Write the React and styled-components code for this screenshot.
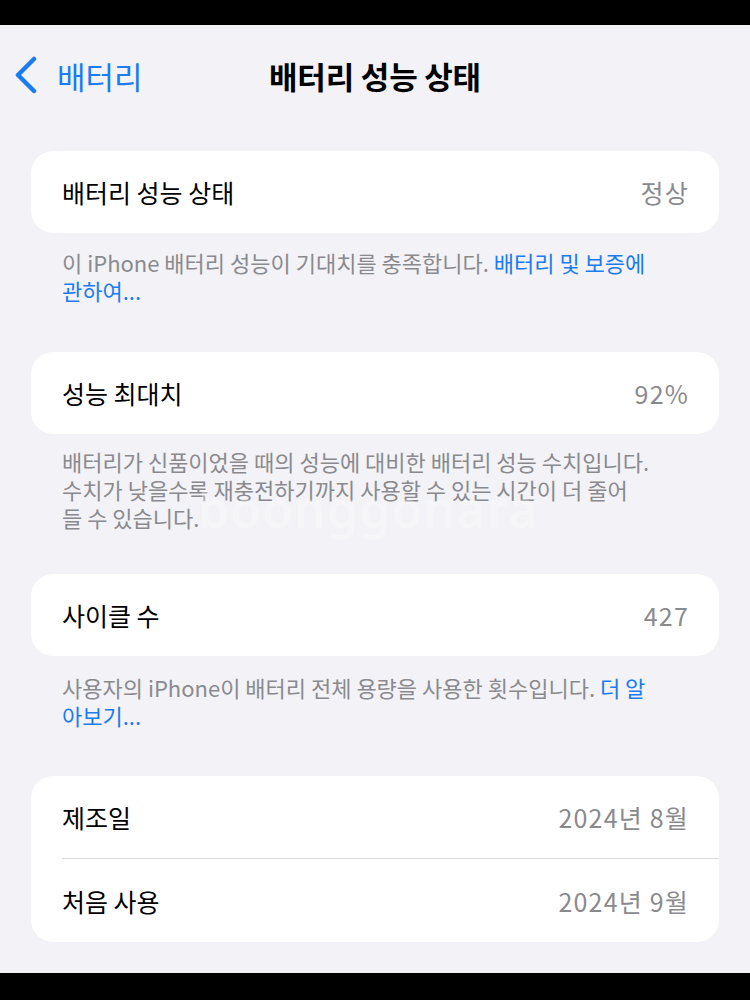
import React from 'react'
import styled, { createGlobalStyle } from 'styled-components'

const GlobalStyle = createGlobalStyle`
  html, body {
    margin: 0;
    padding: 0;
    background: #000;
  }
  body {
    font-family: "Noto Sans CJK KR", "Noto Sans", sans-serif;
    -webkit-font-smoothing: antialiased;
  }
`

const Screen = styled.div`
  width: 750px;
  height: 1000px;
  display: flex;
  flex-direction: column;
  background: #000;
  overflow: hidden;
`

const Content = styled.div`
  position: relative;
  margin-top: 25px;
  height: 948px;
  background: #f2f2f7;
  display: flex;
  flex-direction: column;
`

const Nav = styled.div`
  height: 100px;
  display: grid;
  grid-template-columns: 1fr auto 1fr;
  align-items: center;
  padding: 0 14px;
`

const Back = styled.div`
  display: flex;
  align-items: center;
  gap: 19px;
  color: #1a7cf0;
  font-size: 31px;
  line-height: 1;
`

const Title = styled.div`
  font-size: 31px;
  font-weight: 700;
  color: #000;
  letter-spacing: -0.2px;
`

const Sections = styled.div`
  display: flex;
  flex-direction: column;
  padding: 0 31px;
`

const Group = styled.section`
  margin-top: ${p => p.$gap}px;
`

const Card = styled.div`
  background: #fff;
  border-radius: 22px;
  overflow: hidden;
`

const Row = styled.div`
  height: 82px;
  display: flex;
  align-items: center;
  justify-content: space-between;
  padding: 0 31px;
  font-size: 25px;
  & + & {
    border-top: 1px solid #d9d9de;
    margin-left: 31px;
    padding-left: 0;
    height: 83px;
  }
`

const Label = styled.span`
  color: #000;
`

const Value = styled.span`
  color: #8a8a8e;
  letter-spacing: 1.2px;
  margin-right: -1px;
`

const Footer = styled.div`
  padding: ${p => p.$top}px 31px 0;
  font-size: 22px;
  line-height: 28px;
  color: #8a8a8e;
  white-space: nowrap;
`

const Line = styled.div``

const Link = styled.span`
  color: #1a7cf0;
`

const Watermark = styled.div`
  position: absolute;
  left: 198px;
  top: 450px;
  font-family: "Noto Sans", sans-serif;
  font-size: 50px;
  font-weight: 600;
  color: rgba(255, 255, 255, 0.3);
  letter-spacing: 1px;
  pointer-events: none;
`

const Chevron = () => (
  <svg width="24" height="38" viewBox="0 0 24 38" fill="none">
    <polyline points="20,3 4,19 20,35" stroke="#1a7cf0" strokeWidth="4.5" strokeLinecap="round" strokeLinejoin="round" />
  </svg>
)

const App = () => (
  <Screen>
    <GlobalStyle />
    <Content>
      <Nav>
        <Back>
          <Chevron />
          <span>배터리</span>
        </Back>
        <Title>배터리 성능 상태</Title>
        <div />
      </Nav>
      <Sections>
        <Group $gap={26}>
          <Card>
            <Row><Label>배터리 성능 상태</Label><Value>정상</Value></Row>
          </Card>
          <Footer $top={15}>
            <Line>이 iPhone 배터리 성능이 기대치를 충족합니다. <Link>배터리 및 보증에</Link></Line>
            <Line><Link>관하여...</Link></Line>
          </Footer>
        </Group>
        <Group $gap={48}>
          <Card>
            <Row><Label>성능 최대치</Label><Value>92%</Value></Row>
          </Card>
          <Footer $top={13}>
            <Line>배터리가 신품이었을 때의 성능에 대비한 배터리 성능 수치입니다.</Line>
            <Line>수치가 낮을수록 재충전하기까지 사용할 수 있는 시간이 더 줄어</Line>
            <Line>들 수 있습니다.</Line>
          </Footer>
        </Group>
        <Group $gap={43}>
          <Card>
            <Row><Label>사이클 수</Label><Value>427</Value></Row>
          </Card>
          <Footer $top={17}>
            <Line>사용자의 iPhone이 배터리 전체 용량을 사용한 횟수입니다. <Link>더 알</Link></Line>
            <Line><Link>아보기...</Link></Line>
          </Footer>
        </Group>
        <Group $gap={47}>
          <Card>
            <Row><Label>제조일</Label><Value>2024년 8월</Value></Row>
            <Row><Label>처음 사용</Label><Value>2024년 9월</Value></Row>
          </Card>
        </Group>
      </Sections>
      <Watermark>boonggonara</Watermark>
    </Content>
  </Screen>
)

export default App
